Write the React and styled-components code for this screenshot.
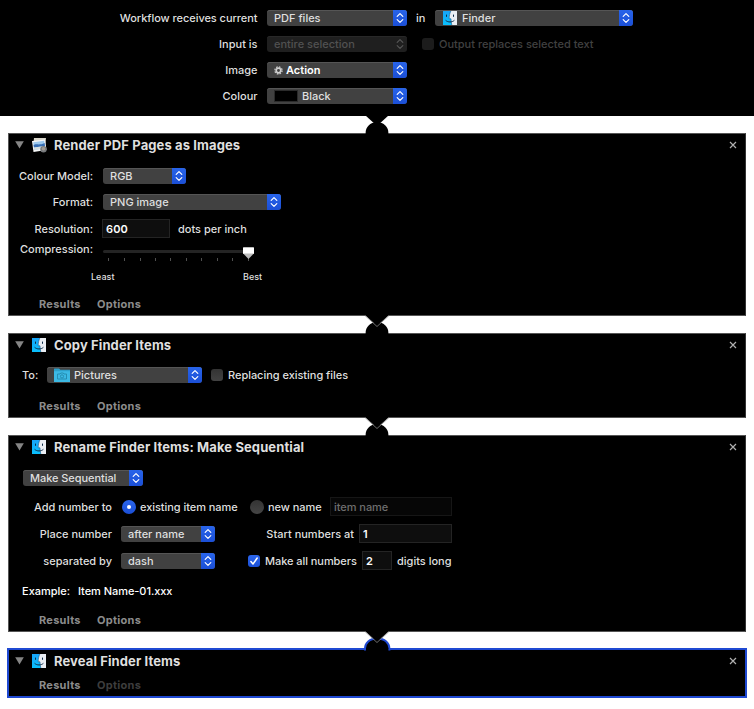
import React from "react";
import styled, { createGlobalStyle, css } from "styled-components";

const GlobalStyle = createGlobalStyle`
  * { box-sizing: border-box; }
  body {
    margin: 0;
    background: #fff;
    font-family: Inter, "Liberation Sans", sans-serif;
    font-size: 11px;
    line-height: 14px;
    color: #dfdfdf;
  }
`;

const Window = styled.main`
  width: 754px;
  height: 709px;
  overflow: hidden;
  background: #fff;
`;

const InputPanel = styled.header`
  display: flex;
  flex-direction: column;
  gap: 10px;
  height: 116px;
  padding-top: 10px;
  background: #000;
`;

const Row = styled.div`
  display: flex;
  align-items: center;
  height: ${(p) => p.$h || 16}px;
  margin-top: ${(p) => p.$mt || 0}px;
  padding-left: ${(p) => p.$pl || 0}px;
`;

const Text = styled.span`
  flex: none;
  width: ${(p) => (p.$w ? `${p.$w}px` : "auto")};
  white-space: pre;
  margin-left: ${(p) => p.$ml || 0}px;
  letter-spacing: ${(p) => p.$ls ?? 0}px;
  color: ${(p) => p.$color || "inherit"};
  font-weight: ${(p) => p.$weight || 500};
`;

const Label = styled(Text)`
  text-align: right;
`;

const Popup = styled.button`
  display: flex;
  flex: none;
  align-items: center;
  width: ${(p) => p.$w}px;
  height: 16px;
  margin: 0 0 0 ${(p) => p.$ml || 0}px;
  padding: 0 0 0 ${(p) => p.$pad ?? 7}px;
  border: 0;
  border-radius: 3px;
  overflow: hidden;
  background: #414141;
  box-shadow: inset 0 1px 0 #555;
  color: #dfdfdf;
  font: inherit;
  ${(p) =>
    p.disabled &&
    css`
      background: #1f1f1f;
      box-shadow: inset 0 1px 0 #282828;
      color: #515151;
    `}
`;

const Stepper = styled.span`
  display: flex;
  align-items: center;
  justify-content: center;
  width: 14px;
  height: 16px;
  margin-left: auto;
  color: ${(p) => (p.$off ? "#555" : "#fff")};
  background: ${(p) => (p.$off ? "transparent" : "linear-gradient(#2864ea, #1b4fd6)")};
`;

const Field = styled.div`
  display: flex;
  flex: none;
  align-items: center;
  width: ${(p) => p.$w}px;
  height: 19px;
  margin-left: ${(p) => p.$ml || 0}px;
  padding-left: 3px;
  border: 1px solid ${(p) => (p.$off ? "#161616" : "#242424")};
  background: ${(p) => (p.$off ? "#060606" : "#0e0e0e")};
  color: ${(p) => (p.$off ? "#6e6e6e" : "#fff")};
`;

const Box = styled.span`
  display: flex;
  flex: none;
  width: 12px;
  height: 12px;
  margin-left: ${(p) => p.$ml || 0}px;
  border-radius: 3px;
  background: ${(p) =>
    p.$on ? "linear-gradient(#2c66ec, #1b50d8)" : p.$off ? "#1c1c1c" : "linear-gradient(#333, #424242)"};
`;

const RadioDot = styled.span`
  display: flex;
  align-items: center;
  justify-content: center;
  flex: none;
  width: 14px;
  height: 14px;
  margin-left: ${(p) => p.$ml || 0}px;
  border-radius: 50%;
  background: ${(p) => (p.$on ? "linear-gradient(#2a65ec, #1b4fd6)" : "linear-gradient(#333, #454545)")};
  &::after {
    content: "";
    width: 4px;
    height: 4px;
    border-radius: 50%;
    background: ${(p) => (p.$on ? "#fff" : "transparent")};
  }
`;

const Swatch = styled.span`
  width: 24px;
  height: 12px;
  border: 1px solid #2b2b2b;
  background: #000;
`;

const Action = styled.section`
  position: relative;
  height: ${(p) => p.$h}px;
  margin: 17px 8px 0;
  border: 1px solid #555;
  border-right-color: #333;
  background: #000;
  ${(p) =>
    p.$selected &&
    css`
      margin: 16px 7px 0;
      border: 2px solid #1f49d2;
    `}
`;

const Header = styled.div`
  display: flex;
  align-items: center;
  height: 22px;
  padding: 0 8px 0 6px;
`;

const Title = styled.h2`
  flex: 1;
  margin: 0 0 0 7px;
  font-size: 13px;
  line-height: 16px;
  font-weight: 700;
  letter-spacing: 0.11px;
  white-space: pre;
`;

const Footer = styled.div`
  display: flex;
  align-items: center;
  height: 16px;
  margin-top: ${(p) => p.$mt}px;
  padding-left: 30px;
  color: #8c8c8c;
`;

const FooterTab = styled.span`
  width: 58px;
  font-weight: 700;
  letter-spacing: 0.27px;
  color: ${(p) => (p.$off ? "#3d3d3d" : "inherit")};
`;

const Joint = styled.svg`
  position: absolute;
  left: 356px;
  top: -19px;
  display: block;
  overflow: visible;
`;

const SliderArt = styled.svg`
  display: block;
  margin-left: 10px;
`;

const Small = styled.span`
  width: ${(p) => p.$w}px;
  font-size: 9px;
  font-weight: 500;
  letter-spacing: 0;
`;

function Arrows({ off }) {
  return (
    <Stepper $off={off}>
      <svg width="8" height="12" viewBox="0 0 8 12" fill="none" stroke="currentColor" strokeWidth="1.2" strokeLinecap="round" strokeLinejoin="round">
        <path d="M1.2 4.4 4 1.6 6.8 4.4M1.2 7.6 4 10.4 6.8 7.6" />
      </svg>
    </Stepper>
  );
}

function Select({ w, ml, pad, disabled, children }) {
  return (
    <Popup $w={w} $ml={ml} $pad={pad} disabled={disabled}>
      {children}
      <Arrows off={disabled} />
    </Popup>
  );
}

function Checkbox({ ml, on, off }) {
  return (
    <Box $ml={ml} $on={on} $off={off}>
      {on && (
        <svg width="12" height="12" viewBox="0 0 12 12" fill="none" stroke="#fff" strokeWidth="1.5" strokeLinecap="round" strokeLinejoin="round">
          <path d="M2.9 6.5 5 9 9.2 3" />
        </svg>
      )}
    </Box>
  );
}

function FinderIcon({ id }) {
  return (
    <svg width="14" height="14" viewBox="0 0 14 14">
      <defs>
        <linearGradient id={id} x1="0" y1="0" x2="0" y2="1">
          <stop offset="0" stopColor="#18a4f8" />
          <stop offset="1" stopColor="#08c0fd" />
        </linearGradient>
      </defs>
      <path d="M0 0H14V14H0Z" fill="#e9edf3" />
      <path d="M0 0H7.8C6.7 2.5 6.2 5 6.2 7.8H8C8 10 8.3 12 8.8 14H0Z" fill={`url(#${id})`} />
      <path d="M7.8 0C6.7 2.5 6.2 5 6.2 7.8H8C8 10 8.3 12 8.8 14" fill="none" stroke="#1c5a8c" strokeWidth=".6" />
      <path d="M3.5 3.6V5.8M10.5 3.6V5.8M2.6 9.3C5 11.5 9 11.5 11.4 9.3" fill="none" stroke="#0e2c48" strokeWidth="1" />
    </svg>
  );
}

function PreviewIcon() {
  return (
    <svg width="15" height="15" viewBox="0 0 15 15">
      <path d="M2 0H14L13 10H1Z" fill="#d8d5ca" />
      <path d="M0 3 13 1.5 14.5 12 1.5 14Z" fill="#f6f7f8" />
      <path d="M1.2 4.2 12.2 2.8 13 10 2.3 12Z" fill="#9cc9ef" />
      <path d="M1.5 7C5 5.5 8 7.5 12.6 5L13 8 2 9.5Z" fill="#376eb4" />
      <path d="M2 9.5 12.8 8 13 10.3 2.3 12Z" fill="#d7dfdf" />
      <circle cx="11.5" cy="11.2" r="3.2" fill="#77797c" />
      <circle cx="11.5" cy="10.7" r="1.8" fill="#a29c93" />
    </svg>
  );
}

function FolderIcon() {
  return (
    <svg width="16" height="14" viewBox="0 0 16 14">
      <path d="M0 1Q0 .4.6.4H5L6.4 1.7H16V14H0Z" fill="#2c9fc9" />
      <path d="M0 3.2H16V14H0Z" fill="#3cb9e4" />
      <path d="M3.5 6H6L6.7 5H9.3L10 6H12.5V11H3.5Z" fill="none" stroke="#2388ac" strokeWidth=".9" />
      <circle cx="8" cy="8.4" r="1.6" fill="none" stroke="#2388ac" strokeWidth=".9" />
    </svg>
  );
}

function GearIcon() {
  return (
    <svg width="9" height="9" viewBox="0 0 9 9">
      <circle cx="4.5" cy="4.5" r="3.6" fill="none" stroke="#c9c9c9" strokeWidth="1.3" strokeDasharray="1.6 1.23" />
      <circle cx="4.5" cy="4.5" r="2.3" fill="none" stroke="#d0d0d0" strokeWidth="1.7" />
    </svg>
  );
}

function Disclosure() {
  return (
    <svg width="9" height="8" viewBox="0 0 9 8">
      <path d="M.2.2H8.8L4.5 7.6Z" fill="#858585" />
    </svg>
  );
}

const IconSlot = styled.span`
  display: flex;
  width: 15px;
  margin-left: 8px;
`;

function Connector({ first, selected }) {
  return (
    <Joint width="24" height="21" viewBox="0 0 24 21">
      {selected ? (
        <>
          <path d="M0 18.5V17.5C0 12 4.5 7.5 12.2 7.5S24.4 12 24.4 17.5V18.5Z" fill="#000" stroke="#1f49d2" strokeWidth="2" />
          <path d="M1 16.8H23.4V21H1Z" fill="#000" />
        </>
      ) : (
        <path d="M.6 20V18C.6 12 5 7.2 12 7.2S23.4 12 23.4 18V20Z" fill="#000" />
      )}
      <path d="M0 0H24L12 11Z" fill="#000" />
      {!first && <path d="M0 .5 12 11.5 24 .5" fill="none" stroke="#888" strokeWidth=".8" />}
    </Joint>
  );
}

function Card({ title, icon, height, first, selected, footTop, optionsOff, children }) {
  return (
    <Action $h={height} $selected={selected}>
      <Connector first={first} selected={selected} />
      <Header>
        <Disclosure />
        <IconSlot>{icon}</IconSlot>
        <Title>{title}</Title>
        <svg width="8" height="8" viewBox="0 0 8 8">
          <path d="M1 1 7 7M7 1 1 7" stroke="#b0b0b0" strokeWidth="1.2" />
        </svg>
      </Header>
      {children}
      <Footer $mt={footTop}>
        <FooterTab>Results</FooterTab>
        <FooterTab $off={optionsOff}>Options</FooterTab>
      </Footer>
    </Action>
  );
}

const TICKS = [5.5, 21.5, 37.5, 52.5, 67.5, 83.5, 98.5, 114.5, 129.5, 145.5];

export default function App() {
  return (
    <Window>
      <GlobalStyle />
      <InputPanel>
        <Row>
          <Label $w={257.5} $ls={-0.05}>Workflow receives current</Label>
          <Select w={140} ml={9.5}><Text>PDF files</Text></Select>
          <Text $ml={9} $w={10}>in</Text>
          <Select w={198} ml={9} pad={8}><FinderIcon id="finderTop" /><Text $ml={5}>Finder</Text></Select>
        </Row>
        <Row>
          <Label $w={257.5}>Input is</Label>
          <Select w={140} ml={9.5} disabled><Text>entire selection</Text></Select>
          <Checkbox ml={15} off />
          <Text $ml={5} $color="#404040">Output replaces selected text</Text>
        </Row>
        <Row>
          <Label $w={257.5}>Image</Label>
          <Select w={140} ml={9.5}><GearIcon /><Text $ml={3} $weight={600} $color="#fff">Action</Text></Select>
        </Row>
        <Row>
          <Label $w={257.5}>Colour</Label>
          <Select w={140} ml={9.5}><Swatch /><Text $ml={4}>Black</Text></Select>
        </Row>
      </InputPanel>

      <Card title="Render PDF Pages as Images" icon={<PreviewIcon />} height={183} first footTop={11}>
        <Row $mt={12}><Label $w={84}>Colour Model:</Label><Select w={83} ml={10}><Text>RGB</Text></Select></Row>
        <Row $mt={10}><Label $w={84}>Format:</Label><Select w={178} ml={10}><Text>PNG image</Text></Select></Row>
        <Row $mt={9} $h={19}>
          <Label $w={84}>Resolution:</Label>
          <Field $w={68} $ml={9}><Text $weight={600} $ls={0.1}>600</Text></Field>
          <Text $ml={8}>dots per inch</Text>
        </Row>
        <Row $mt={3} $h={16}>
          <Label $w={84}>Compression:</Label>
          <SliderArt width="153" height="16" viewBox="0 0 153 16" overflow="visible">
            <rect x="0" y="9" width="150" height="3" rx="1.5" fill="#242424" />
            {TICKS.map((x) => <path key={x} d={`M${x} 17V20`} stroke="#505050" />)}
            <path d="M140 6.6Q140 6 140.6 6H150.4Q151 6 151 6.6V12.3L145.5 18 140 12.3Z" fill="#bbb" />
            <path d="M140 7H151V12.5H140Z" fill="#fff" />
          </SliderArt>
        </Row>
        <Row $mt={12} $h={16} $pl={82}><Small $w={152}>Least</Small><Small>Best</Small></Row>
      </Card>

      <Card title="Copy Finder Items" icon={<FinderIcon id="finderCopy" />} height={85} footTop={15}>
        <Row $mt={11}>
          <Text $ml={13} $w={16}>To:</Text>
          <Select w={155} ml={9}><FolderIcon /><Text $ml={4}>Pictures</Text></Select>
          <Checkbox ml={9} />
          <Text $ml={5} $ls={-0.03}>Replacing existing files</Text>
        </Row>
      </Card>

      <Card title="Rename Finder Items: Make Sequential" icon={<FinderIcon id="finderRename" />} height={197} footTop={13}>
        <Row $mt={12} $pl={14}><Select w={120}><Text $ls={-0.06}>Make Sequential</Text></Select></Row>
        <Row $mt={11} $h={19}>
          <Label $w={103}>Add number to</Label>
          <RadioDot $ml={10} $on />
          <Text $ml={4} $w={98} $ls={-0.05}>existing item name</Text>
          <RadioDot $ml={12} />
          <Text $ml={4} $w={54} $ls={-0.05}>new name</Text>
          <Field $w={122} $ml={8} $off><Text $ls={-0.05}>item name</Text></Field>
        </Row>
        <Row $mt={8} $h={19}>
          <Label $w={103}>Place number</Label>
          <Select w={94} ml={9}><Text>after name</Text></Select>
          <Label $w={139}>Start numbers at</Label>
          <Field $w={93} $ml={5}><Text $weight={600}>1</Text></Field>
        </Row>
        <Row $mt={8} $h={19}>
          <Label $w={103}>separated by</Label>
          <Select w={94} ml={9}><Text>dash</Text></Select>
          <Checkbox ml={33} on />
          <Text $ml={5} $w={92} $ls={-0.06}>Make all numbers</Text>
          <Field $w={30} $ml={5}><Text $weight={600}>2</Text></Field>
          <Text $ml={5}>digits long</Text>
        </Row>
        <Row $mt={13} $pl={13}><Text $w={48} $color="#fff">Example:</Text><Text $ml={8} $ls={-0.05} $color="#fff">Item Name-01.xxx</Text></Row>
      </Card>

      <Card title="Reveal Finder Items" icon={<FinderIcon id="finderReveal" />} height={50} selected footTop={5} optionsOff />
    </Window>
  );
}
